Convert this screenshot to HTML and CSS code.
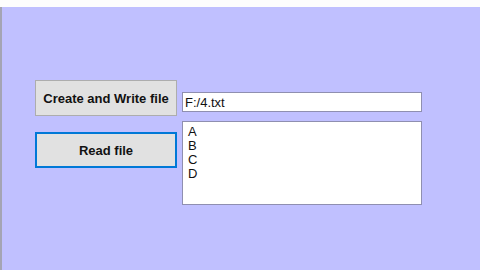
FILE: index.html
```html
<!DOCTYPE html>
<html lang="en">

<head>
    <meta charset="UTF-8">
    <meta name="viewport" content="width=device-width, initial-scale=1.0">
    <title>File demo</title>
    <link rel="stylesheet" href="styles.css">
</head>

<body>
	<div class="titlebar"></div>
	<div class="form">
		<div class="buttons">
			<button class="btn">Create and Write file</button>
			<button class="btn focused">Read file</button>
		</div>
		<div class="fields">
			<div class="textbox">F:/4.txt</div>
			<div class="textarea">
				<div>A</div>
				<div>B</div>
				<div>C</div>
				<div>D</div>
			</div>
		</div>
	</div>
</body>

</html>
```

FILE: styles.css
```css
        * {
            margin: 0;
            padding: 0;
            box-sizing: border-box;
            font-family: "Liberation Sans", Arial, sans-serif;
        }
        body{
            background: #c0c0ff;
            width: 480px;
            height: 270px;
            overflow: hidden;
        }
        .titlebar{
            height: 7px;
            background: #fdfdfd;
        }
        .form{
            display: flex;
            height: 263px;
            padding: 73px 0 0 33px;
            border-left: 2px solid #a4a4b4;
        }
        .buttons{
            display: flex;
            flex-direction: column;
            gap: 16px;
            width: 142px;
        }
        .btn{
            height: 36px;
            background: #e1e1e1;
            border: 1px solid #adadad;
            font-size: 13px;
            font-weight: bold;
            color: #111;
        }
        .btn.focused{
            border: 2px solid #0078d7;
        }
        .fields{
            display: flex;
            flex-direction: column;
            gap: 9px;
            width: 240px;
            margin-left: 5px;
            padding-top: 12px;
        }
        .textbox{
            height: 20px;
            background: #fff;
            border: 1px solid #8f8fb0;
            padding: 2px 0 0 2px;
            font-size: 13px;
            color: #111;
        }
        .textarea{
            height: 84px;
            background: #fff;
            border: 1px solid #8f8fb0;
            padding: 3px 0 0 5px;
            font-size: 13px;
            line-height: 14px;
            color: #111;
        }
```
